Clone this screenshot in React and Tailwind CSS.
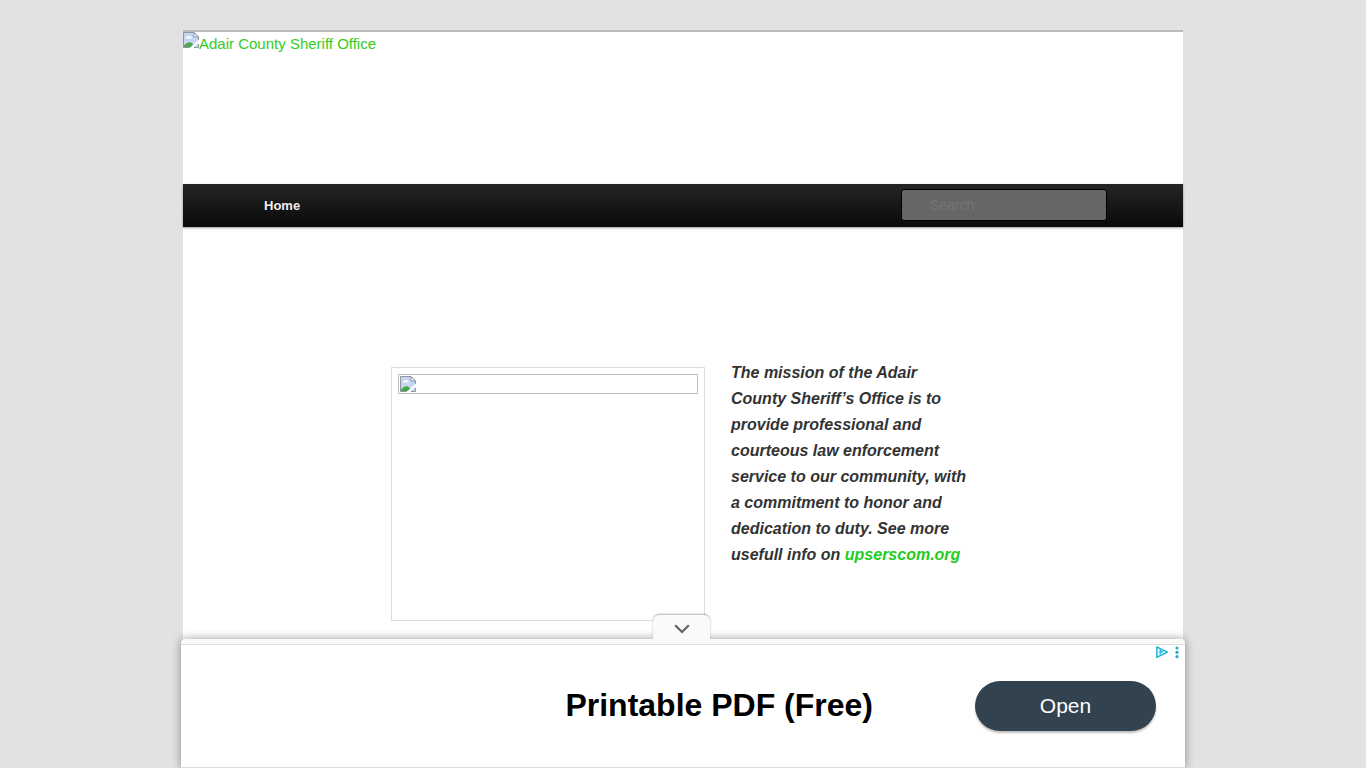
import React, { useState } from "react";

function BrokenImage({ className }) {
  return (
    <svg className={className} width="16" height="16" viewBox="0 0 16 16" aria-hidden="true">
      <path d="M1 1h10l4 4v10H1z" fill="#c5d5f4" />
      <path d="M3 6.5C2.6 5.2 4 4.2 5 4.8 5.8 3.6 8 4 8 5.5c1 0 1.3.6 1 1z" fill="#fff" />
      <path d="M1 15v-1.500C3 11 5.500 9.500 8 10.500L11 13v2z" fill="#4ca64c" />
      <path d="M0.500 15.500v-15H11l4.500 4.500" fill="none" stroke="#8f959d" />
      <path d="M11 0.500V5h4.500z" fill="#fff" stroke="#8f959d" />
      <path d="M15.500 5v3M0.500 15.500H7M11 15.500h4.500V12" fill="none" stroke="#8f959d" />
      <path d="M16 7.500V10l-6 6H6.500z" fill="#fff" />
    </svg>
  );
}

function AdChoices() {
  return (
    <div className="absolute top-0 right-1 flex items-center gap-1">
      <a href="#adchoices" aria-label="AdChoices">
        <svg className="block" width="14" height="14" viewBox="0 0 14 14" fill="none" stroke="#22b0cc" strokeWidth="1.400">
          <path d="M1.800 2v10.400L12.500 7.200z" strokeLinejoin="round" fill="#e2f9fd" />
          <path d="M5.200 5v4.400M5.200 6l2.800 1.300" />
        </svg>
      </a>
      <button type="button" aria-label="Ad options">
        <svg className="block" width="8" height="14" viewBox="0 0 8 14" fill="#22a9c4">
          <circle cx="4" cy="3" r="1.600" />
          <circle cx="4" cy="7.300" r="1.600" />
          <circle cx="4" cy="11.600" r="1.600" />
        </svg>
      </button>
    </div>
  );
}

function AnchorAd() {
  const [open, setOpen] = useState(true);

  return (
    <aside className="fixed inset-x-0 bottom-0 flex justify-center">
      <div className="relative w-full max-w-[1004px] rounded-t border-b border-[#dddddd] bg-[#fafafa] pt-[5px] shadow-[0_0_10px_rgba(0,0,0,0.4)]">
        <button
          type="button"
          aria-label={open ? "Collapse ad" : "Expand ad"}
          onClick={() => setOpen((v) => !v)}
          className="absolute bottom-full left-1/2 -ml-[30px] flex h-6 w-[57px] items-center justify-center rounded-t-md bg-[#fafafa] pt-1 shadow-[0_-1px_2px_rgba(0,0,0,0.3)]"
        >
          <svg width="16" height="10" viewBox="0 0 16 10" fill="none" stroke="#616161" strokeWidth="2.200">
            <path d="M1.200 1.200L8 8l6.800-6.800" />
          </svg>
        </button>

        {open && (
          <div className="relative flex h-[123px] items-center justify-end gap-[102px] border-t border-[#dddddd] bg-white pr-[29px]">
            <h2 className="pb-0.5 text-[32px] font-bold text-black">Printable PDF (Free)</h2>
            <a
              href="#open"
              className="flex h-[50px] w-[181px] items-center justify-center rounded-full bg-[#33424f] text-[21px] text-white shadow-[0_2px_2px_rgba(0,0,0,0.25)]"
            >
              Open
            </a>
            <AdChoices />
          </div>
        )}
      </div>
    </aside>
  );
}

export default function App() {
  const [query, setQuery] = useState("");

  return (
    <div className="flex min-h-screen flex-col bg-[#e2e2e2] pt-[30px] font-['Liberation_Sans',Arial,sans-serif] text-[15px] text-[#333333]">
      <div className="mx-auto flex w-full max-w-[1000px] flex-1 flex-col bg-white">
        <header className="border-t-2 border-[#bbbbbb]">
          <a href="#home" className="flex h-38 items-start text-[#33cc22]">
            <BrokenImage />
            <span className="leading-6">Adair County Sheriff Office</span>
          </a>

          <nav className="flex h-[43px] items-start justify-between bg-linear-to-b from-[#252525] to-[#0a0a0a] px-[76px] shadow-[0_1px_2px_rgba(0,0,0,0.4)]">
            <a href="#home" className="px-[5px] text-[13px] leading-[43px] font-bold text-[#eeeeee]">
              Home
            </a>
            <form role="search" className="pt-[5px]" onSubmit={(e) => e.preventDefault()}>
              <input
                type="search"
                aria-label="Search"
                placeholder="Search"
                value={query}
                onChange={(e) => setQuery(e.target.value)}
                className="block h-8 w-[206px] rounded-[3px] border border-black bg-[#666666] pl-7 text-sm text-white outline-none placeholder:text-[#757575]"
              />
            </form>
          </nav>
        </header>

        <main className="mx-auto flex w-full max-w-[584px] items-start gap-[26px] pt-[133px] pb-[147px]">
          <figure className="mt-[7px] h-[254px] w-[314px] shrink-0 border border-[#dddddd] p-[6px]">
            <div className="h-5 border border-[#c0c0c0] p-px">
              <BrokenImage />
            </div>
          </figure>
          <p className="w-[242px] shrink-0 text-base leading-[26px] font-bold italic">
            The mission of the Adair County Sheriff’s Office is to provide professional and courteous law
            enforcement service to our community, with a commitment to honor and dedication to duty. See more
            usefull info on{" "}
            <a href="#upserscom" className="text-[#22cc22]">
              upserscom.org
            </a>
          </p>
        </main>
      </div>

      <AnchorAd />
    </div>
  );
}
